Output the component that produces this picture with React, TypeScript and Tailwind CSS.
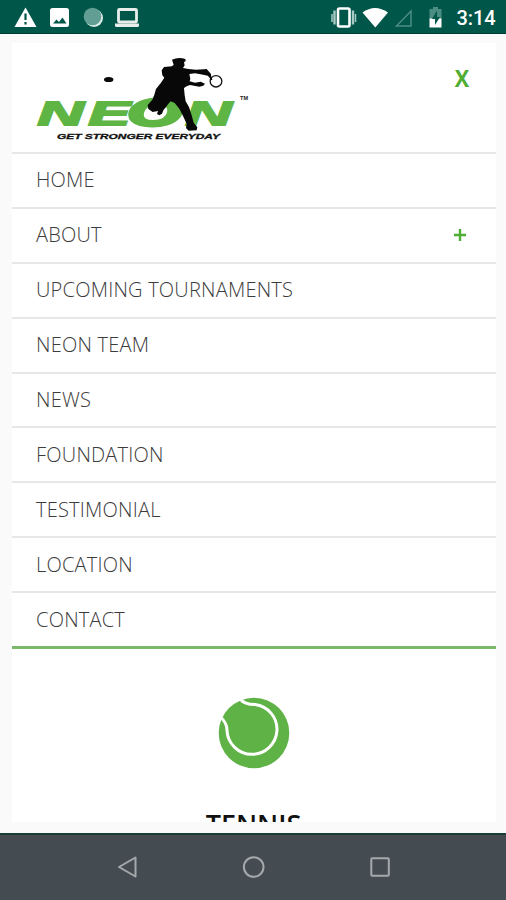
import { useState } from "react";

const menuItems = [
  { label: "HOME" },
  { label: "ABOUT", expandable: true },
  { label: "UPCOMING TOURNAMENTS" },
  { label: "NEON TEAM" },
  { label: "NEWS" },
  { label: "FOUNDATION" },
  { label: "TESTIMONIAL" },
  { label: "LOCATION" },
  { label: "CONTACT" },
];

function StatusBar() {
  return (
    <header className="h-[34px] shrink-0 border-b border-[#003c31] bg-[#01564a]">
      <svg className="block" width="506" height="33" viewBox="0 0 506 33">
        {/* warning, picture, sync, laptop */}
        <path d="M25.5 7.5 36.5 27h-22z" fill="#fff" />
        <path d="M25.5 13.500v6.500M25.5 22v2.500" stroke="#01564a" strokeWidth="2.2" />
        <rect x="50" y="8" width="19" height="19" rx="2.5" fill="#fff" />
        <path d="M53 23.500l3.500-4 2.500 2.500 3.500-4.500 4 6z" fill="#01564a" />
        <circle cx="94" cy="18" r="9" fill="#dcebe8" />
        <circle cx="92.500" cy="16.500" r="8.800" fill="#629e94" />
        <rect x="118.500" y="9.500" width="18" height="12.500" rx="1" fill="none" stroke="#e9eeea" strokeWidth="2.800" />
        <path d="M115 23.500h24v2q0 1.500-1.500 1.500h-21q-1.500 0-1.500-1.500z" fill="#e9eeea" />

        {/* vibrate, wifi, signal, battery */}
        <rect x="338" y="8.500" width="11.500" height="18" rx="1.500" fill="none" stroke="#fff" strokeWidth="2.600" />
        <path d="M334.500 10.500v14M353 10.500v14" stroke="#a7cbc4" strokeWidth="2.400" />
        <path d="M332 14v8M355.500 14v8" stroke="#a7cbc4" strokeWidth="1.500" />
        <path d="M362.500 12.500Q375 3.500 388 12.500L375.300 27.500z" fill="#fff" />
        <path d="M411 11v15h-14.500z" fill="none" stroke="#4b8d82" strokeWidth="1.500" />
        <path d="M433 7h5v2h3.500v10h-12V9h3.500z" fill="#4b8d82" />
        <path d="M429.500 18.500h12v9h-12z" fill="#fff" />
        <path d="M437 10.500l-5 8.500h3v6l5-8h-3z" fill="#01564a" />
        <text x="456.500" y="25" fill="#fff" fontFamily="Roboto, sans-serif" fontWeight="500" fontSize="20" textLength="39">
          3:14
        </text>
      </svg>
    </header>
  );
}

function Logo() {
  return (
    <svg className="ml-6 mt-[7px] block overflow-visible" width="216" height="95" viewBox="36 50 216 95">
      <g fill="#5fb544" stroke="#5fb544" strokeWidth="1.800" fontFamily="Liberation Sans, sans-serif" fontWeight="700" fontStyle="italic">
        <text transform="translate(37.500 125) scale(1.880 1)" fontSize="34">N</text>
        <text transform="translate(88.500 125) scale(1.840 1)" fontSize="34">E</text>
        <text transform="translate(127.500 126) scale(1.780 1)" fontSize="39" strokeWidth="3">O</text>
        <text transform="translate(185.500 125) scale(1.880 1)" fontSize="34">N</text>
      </g>
      <ellipse cx="108.700" cy="79.500" rx="4.700" ry="2.600" fill="#0a0a0a" />
      {/* player silhouette */}
      <g transform="translate(140 52) scale(0.3333)" fill="#080808">
        <path d="M96 23Q115 14 136 21L137 27 132 31 134 40 129 48 145 51 168 53 192 52 200 51 213 66 214 82 208 76 203 71 190 68 165 64 148 66 151 80 149 88 165 92 182 89 195 95 190 101 178 104 150 99 140 103 132 108 134 130 137 148 147 165 155 190 161 212 172 226 170 235 146 236 138 228 140 215 128 190 118 170 104 153 92 148 84 157 78 165 70 175 66 185 58 190 51 186 54 177 38 180 25 171 23 159 37 143 43 128 48 111 63 92 73 77 67 70 65 55 72 45 96 43 101 38Z" />
        <ellipse cx="228" cy="88" rx="17.500" ry="17" fill="none" stroke="#161616" strokeWidth="4" />
        <path d="M206 64l9 20" stroke="#080808" strokeWidth="5" />
      </g>
      <text x="57" y="139" fill="#111" stroke="#111" strokeWidth="0.300" fontFamily="Liberation Sans, sans-serif" fontWeight="700" fontStyle="italic" fontSize="7" textLength="163" lengthAdjust="spacingAndGlyphs">
        GET STRONGER EVERYDAY
      </text>
      <text x="240" y="100" fill="#222" fontFamily="Liberation Sans, sans-serif" fontWeight="700" fontSize="5" textLength="8" lengthAdjust="spacingAndGlyphs">
        TM
      </text>
    </svg>
  );
}

function TennisBall() {
  return (
    <svg className="block" width="72" height="72" viewBox="0 0 72 72">
      <circle cx="36" cy="36" r="35.300" fill="#5fb346" />
      <path
        d="M22 2c4 5 9 5.500 15 5.500a25 25 0 1 1-28 26C9 29 8 25 2.500 20"
        fill="none"
        stroke="#fff"
        strokeWidth="3"
      />
    </svg>
  );
}

function NavBar() {
  return (
    <footer className="h-[67px] shrink-0 border-t-2 border-[#183d35] bg-[#454c51]">
      <svg className="block" width="506" height="65" viewBox="0 835 506 65" fill="none" stroke="#a4a9ab" strokeWidth="2">
        <path d="M135.500 857.500v19L119 867z" strokeLinejoin="round" />
        <circle cx="253.700" cy="867" r="9.800" />
        <rect x="371.300" y="858.300" width="17.500" height="17.500" rx="1" />
      </svg>
    </footer>
  );
}

export default function App() {
  const [open, setOpen] = useState(false);

  return (
    <div className="flex h-[900px] w-[506px] flex-col overflow-hidden bg-[#fafafa] font-['Open_Sans',sans-serif]">
      <StatusBar />

      <main className="mt-[9px] mb-[11px] ml-3 flex min-h-0 w-[484px] flex-1 flex-col overflow-hidden bg-white">
        <div className="flex h-[111px] shrink-0 items-start justify-between border-b-2 border-[#e7e7e7]">
          <Logo />
          <button className="mt-[18px] mr-[26px] text-[24px] leading-[34px] font-bold text-[#4fae32]">
            <span className="block scale-x-90">X</span>
          </button>
        </div>

        <nav className="shrink-0 border-b-3 border-[#7bb96c]">
          {menuItems.map((item) => (
            <div
              key={item.label}
              className="flex h-[54.9px] items-center justify-between border-b-2 border-[#e7e7e7] pr-[29px] pl-6 last:h-[52.800px] last:border-b-0"
            >
              <span className="text-[20px] font-light tracking-[0.220px] text-[#3c3c3c]">{item.label}</span>
              {item.expandable && (
                <button onClick={() => setOpen(!open)} aria-expanded={open}>
                  <svg className="block" width="14" height="14" viewBox="0 0 14 14">
                    <path d="M7 1v12M1 7h12" stroke="#4fae32" strokeWidth="2.400" />
                  </svg>
                </button>
              )}
            </div>
          ))}
        </nav>

        <section className="flex flex-col items-center pt-12 pr-px">
          <TennisBall />
          <h2 className="mt-[35px] text-[27px] leading-[40px] font-semibold whitespace-nowrap text-[#111]">TENNIS</h2>
        </section>
      </main>

      <NavBar />
    </div>
  );
}
